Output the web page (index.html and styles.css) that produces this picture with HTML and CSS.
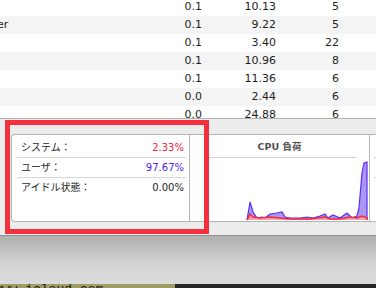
FILE: index.html
```html
<!DOCTYPE html>
<html lang="ja">
<head>
    <meta charset="UTF-8">
    <meta name="viewport" content="width=device-width, initial-scale=1.0">
    <title>アクティビティモニタ - CPU</title>
    <link rel="stylesheet" href="styles.css">
</head>
<body>

<div class="proc-table">
    <div class="rows">
        <div class="row"><span class="name"></span><span>0.1</span><span>10.13</span><span>5</span></div>
        <div class="row"><span class="name">er</span><span>0.1</span><span>9.22</span><span>5</span></div>
        <div class="row"><span class="name"></span><span>0.1</span><span>3.40</span><span>22</span></div>
        <div class="row"><span class="name"></span><span>0.1</span><span>10.96</span><span>8</span></div>
        <div class="row"><span class="name"></span><span>0.1</span><span>11.36</span><span>6</span></div>
        <div class="row"><span class="name"></span><span>0.0</span><span>2.44</span><span>6</span></div>
        <div class="row"><span class="name"></span><span>0.0</span><span>24.88</span><span>6</span></div>
    </div>
</div>

<div class="panel">
    <div class="card">
        <div class="stats">
            <div class="stat"><span>システム：</span><span class="sys">2.33%</span></div>
            <div class="stat"><span>ユーザ：</span><span class="user">97.67%</span></div>
            <div class="stat last"><span>アイドル状態：</span><span>0.00%</span></div>
        </div>
        <div class="chart">
            <div class="chart-title">CPU 負荷</div>
            <div class="chart-rule"></div>
            <svg class="plot" width="179" height="63" viewBox="0 0 179 63">
                <polygon class="user-area" points="57,62 60,44 63,54 67,60 72,59 75,60 80,56 87,55 92,54 95,59 100,60 110,60 117,59 123,60 130,58 135,56 138,60 143,57 150,60 157,55 162,60 167,58 169,50 172,15 174,5 177,4 177,62"/>
                <polyline class="user-line" points="57,62 60,44 63,54 67,60 72,59 75,60 80,56 87,55 92,54 95,59 100,60 110,60 117,59 123,60 130,58 135,56 138,60 143,57 150,60 157,55 162,60 167,58 169,50 172,15 174,5 177,4 177,62"/>
                <polygon class="sys-area" points="57,62 60,56 63,59 70,60 80,59 90,60 100,61 120,61 135,59 140,61 150,61 160,59 167,60 172,58 177,60 177,62"/>
                <polyline class="sys-line" points="57,62 60,56 63,59 70,60 80,59 90,60 100,61 120,61 135,59 140,61 150,61 160,59 167,60 172,58 177,60 177,62"/>
            </svg>
        </div>
        <div class="side">
            <div class="stat"></div>
            <div class="stat"></div>
        </div>
    </div>
    <div class="highlight"></div>
</div>

<div class="window-edge"></div>

<div class="desktop">
    <div class="wallpaper-left"><span>www.icloud.com</span></div>
    <div class="wallpaper-right"></div>
</div>

</body>
</html>
```

FILE: styles.css
```css
body {
    margin: 0;
    width: 376px;
    height: 288px;
    overflow: hidden;
    font-family: "DejaVu Sans", "Noto Sans CJK JP", sans-serif;
    color: #1e1e1e;
    background-color: #ececec;
}
.proc-table {
    height: 118px;
    overflow: hidden;
    background-color: #fff;
    border-bottom: 1px solid #b2b2b2;
}
.rows {
    margin-top: -2px;
}
.row {
    display: grid;
    grid-template-columns: 170px 32px 74px 63px;
    height: 18px;
    line-height: 18px;
    font-size: 11px;
    text-align: right;
}
.row:nth-child(even) {
    background-color: #f4f4f4;
}
.row .name {
    text-align: left;
    text-indent: -3px;
}
.panel {
    position: relative;
    padding: 15px 0 13px 11px;
}
.card {
    display: flex;
    height: 86px;
    background-color: #fff;
    border: 1px solid #b4b4b4;
    border-right: none;
    border-radius: 4px 0 0 4px;
    font-size: 10px;
}
.stats {
    flex-shrink: 0;
    width: 177px;
    padding-top: 3px;
    border-right: 1px solid #b9b9b9;
}
.stat {
    display: flex;
    justify-content: space-between;
    height: 19px;
    line-height: 19px;
    margin: 0 3px 0 5px;
    padding: 0 2px 0 4px;
    border-bottom: 1px solid #d6d6d6;
}
.stat.last {
    border-bottom: none;
}
.sys {
    color: #f5223a;
}
.user {
    color: #4a22f0;
}
.chart {
    flex-shrink: 0;
    width: 179px;
    border-right: 1px solid #b9b9b9;
}
.chart-title {
    margin-top: 5px;
    height: 14px;
    line-height: 14px;
    text-align: center;
    font-weight: bold;
    font-size: 9.5px;
    color: #505050;
}
.chart-rule {
    height: 1px;
    margin: 3px 12px 0 17px;
    background-color: #d0d0d0;
}
.plot {
    display: block;
}
.user-area {
    fill: #ab98f6;
}
.user-line {
    fill: none;
    stroke: #5a2cf5;
    stroke-width: 1.2;
}
.sys-area {
    fill: #f5a3ad;
}
.sys-line {
    fill: none;
    stroke: #f52a40;
    stroke-width: 1.6;
}
.side {
    flex: 1;
    min-width: 0;
    overflow: hidden;
    padding-top: 3px;
}
.side .stat {
    margin: 0 0 0 4px;
}
.highlight {
    position: absolute;
    left: 5px;
    top: 1px;
    width: 194px;
    height: 104px;
    border: 5px solid #f4303f;
}
.window-edge {
    height: 48px;
    border-top: 1px solid #929292;
    background: linear-gradient(#b0b0b0, #d4d4d4 60%, #dbdbdb);
}
.desktop {
    display: flex;
    height: 4px;
    overflow: hidden;
}
.wallpaper-left {
    width: 175px;
    background-color: #9f9d66;
    font-family: "Liberation Mono", monospace;
    font-size: 13px;
    line-height: 12px;
    color: #1a1a1a;
}
.wallpaper-left span {
    display: block;
    margin-left: -6px;
}
.wallpaper-right {
    flex: 1;
    background-color: #262626;
}
```
